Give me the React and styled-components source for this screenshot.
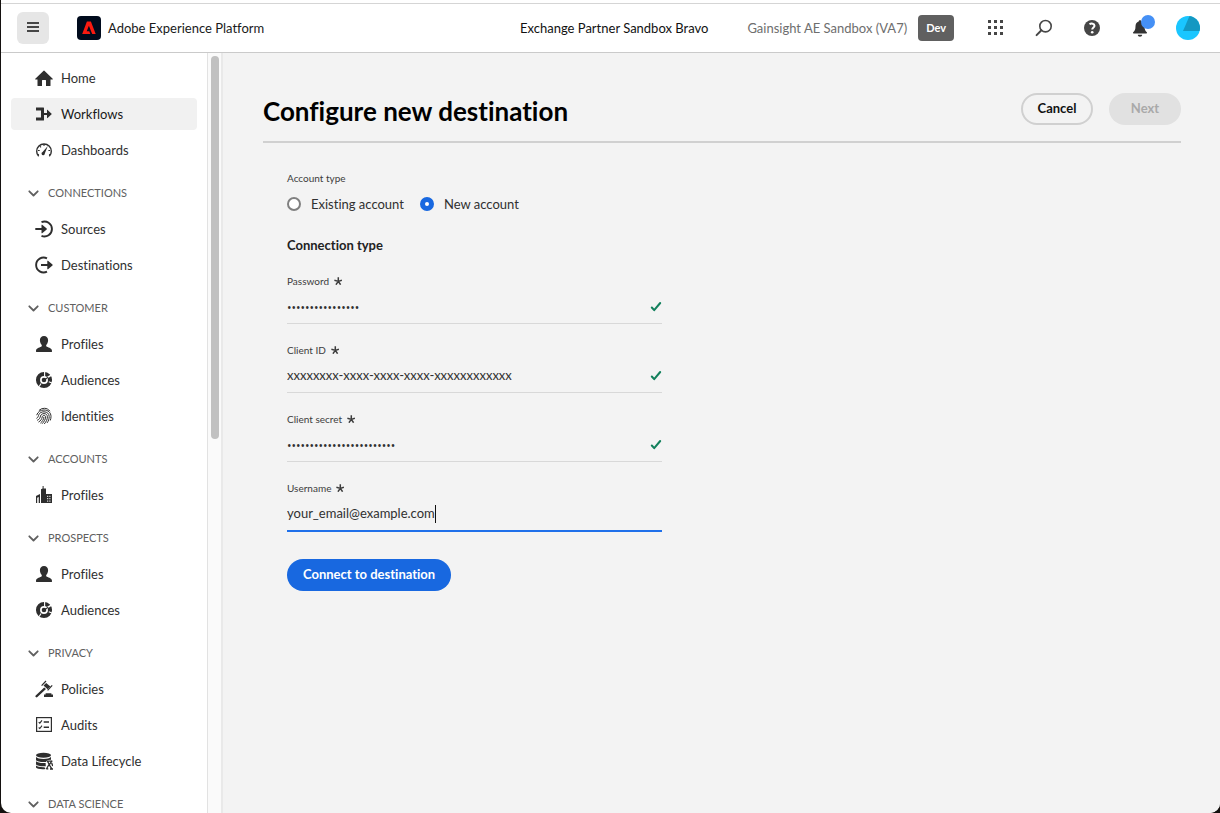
import React from "react";
import styled, { createGlobalStyle, css } from "styled-components";

const GlobalStyle = createGlobalStyle`
  *, *::before, *::after { box-sizing: border-box; }
  body {
    margin: 0;
    background: #14110f;
    color: #222;
    font-family: Lato, "Open Sans", sans-serif;
    font-size: 13px;
    line-height: 20px;
    font-variant-ligatures: no-common-ligatures;
  }
  button, input { font: inherit; color: inherit; }
`;

/* ---------- window ---------- */

const Window = styled.div`
  display: flex;
  flex-direction: column;
  height: 100vh;
  margin-left: 1px;
  padding-top: 3px;
  background: #fff;
  border-radius: 0 0 10px 10px;
  overflow: hidden;
`;

const TopBar = styled.header`
  flex: none;
  display: flex;
  align-items: center;
  height: 50px;
  padding: 0 16px;
  border-top: 1px solid #d5d5d5;
  border-bottom: 1px solid #cacaca;
`;

const MenuButton = styled.button`
  display: grid;
  place-items: center;
  width: 32px;
  height: 32px;
  padding: 0;
  border: 0;
  border-radius: 6px;
  background: #e6e6e6;
`;

const Brand = styled.a`
  display: flex;
  align-items: center;
  gap: 7px;
  margin-left: 28px;
  color: #1a1a1a;
  text-decoration: none;
`;

const Context = styled.div`
  display: flex;
  align-items: center;
  margin-left: auto;
  color: #111;
  white-space: nowrap;
`;

const SandboxName = styled.span`
  margin-left: 39px;
  color: #6e6e6e;
`;

const Badge = styled.span`
  margin-left: 11px;
  padding: 3px 8px;
  border-radius: 4px;
  background: #606060;
  color: #fff;
  font-size: 11px;
  font-weight: 700;
`;

const Tools = styled.div`
  display: flex;
  gap: 16px;
  margin-left: 26px;
`;

const ToolButton = styled.button`
  position: relative;
  display: grid;
  place-items: center;
  width: 32px;
  height: 32px;
  padding: 0;
  border: 0;
  background: none;
  color: #464646;
`;

const Dot = styled.span`
  position: absolute;
  top: 3px;
  right: 1px;
  width: 14px;
  height: 14px;
  border-radius: 50%;
  background: #4590f5;
`;

const Body = styled.div`
  flex: 1;
  display: flex;
  min-height: 0;
`;

/* ---------- side navigation ---------- */

const Nav = styled.nav`
  flex: none;
  width: 206px;
  padding: 9px 10px 0;
  overflow-y: auto;
  scrollbar-width: none;
`;

const NavList = styled.ul`
  display: flex;
  flex-direction: column;
  gap: 4px;
  margin: 0;
  padding: 0;
  list-style: none;
`;

const NavLink = styled.a`
  display: flex;
  align-items: center;
  gap: 8px;
  height: 32px;
  padding-left: 24px;
  border-radius: 4px;
  color: ${(p) => (p.$active ? "#1a1a1a" : "#303030")};
  background: ${(p) => (p.$active ? "#f1f1f1" : "transparent")};
  text-decoration: none;
  svg { color: #2e2e2e; }
`;

const GroupButton = styled.button`
  display: flex;
  align-items: center;
  gap: 9px;
  width: 100%;
  height: 32px;
  margin: 11px 0 4px;
  padding: 0 0 0 17px;
  border: 0;
  background: none;
  color: #606060;
  font-size: 11px;
`;

const Track = styled.div`
  flex: none;
  width: 16px;
  padding: 3px 2px 0 3px;
  background: #fafafa;
  border-left: 1px solid #e2e2e2;
  border-right: 2px solid #e9e9e9;
`;

const Thumb = styled.div`
  width: 8px;
  height: 383px;
  max-height: 100%;
  border-radius: 4px;
  background: #c1c1c1;
`;

/* ---------- page ---------- */

const Main = styled.main`
  flex: 1;
  min-width: 0;
  padding: 40px 39px 0 40px;
  overflow-y: auto;
  background: #f3f3f3;
`;

const PageHeader = styled.div`
  display: flex;
  align-items: center;
  gap: 16px;
  padding-bottom: 16px;
  border-bottom: 2px solid #d0d0d0;
`;

const Title = styled.h1`
  flex: 1;
  margin: 0;
  padding-top: 4px;
  color: #000;
  font-size: 26px;
  line-height: 28px;
  font-weight: 700;
`;

const Pill = styled.button`
  height: 32px;
  padding: 0 16px 2px;
  min-width: 72px;
  border: 0;
  border-radius: 16px;
  font-size: 13px;
  font-weight: 700;
  line-height: 20px;
  white-space: nowrap;
  ${(p) =>
    p.$kind === "outline" &&
    css`
      padding: 0 12px 2px;
      border: 2px solid #d0d0d0;
      background: transparent;
      color: #111;
    `}
  ${(p) =>
    p.$kind === "disabled" &&
    css`
      background: #e1e1e1;
      color: #a9a9a9;
    `}
  ${(p) =>
    p.$kind === "primary" &&
    css`
      margin-top: 27px;
      background: #1868e0;
      color: #fff;
    `}
`;

const Form = styled.form`
  width: 399px;
  max-width: 100%;
  padding: 25px 0 40px 24px;
`;

const RadioGroup = styled.fieldset`
  display: flex;
  gap: 16px;
  margin: 0;
  padding: 0;
  border: 0;
  white-space: nowrap;
`;

const Legend = styled.legend`
  padding: 0;
  margin-bottom: 6px;
  color: #3c3c3c;
  font-size: 10px;
`;

const RadioLabel = styled.label`
  display: flex;
  align-items: center;
  gap: 10px;
  color: #303030;
`;

const Radio = styled.input`
  appearance: none;
  width: 14px;
  height: 14px;
  margin: 0;
  border: 2px solid #808080;
  border-radius: 50%;
  background: #fff;
  &:checked {
    border: 5px solid #1868e0;
  }
`;

const SectionTitle = styled.h2`
  margin: 21px 0 16px;
  color: #222;
  font-size: 13px;
  font-weight: 700;
  line-height: 20px;
`;

const Fields = styled.div`
  display: flex;
  flex-direction: column;
  gap: 16px;
`;

const Label = styled.label`
  display: flex;
  align-items: center;
  gap: 5px;
  color: #3c3c3c;
  font-size: 10px;
  line-height: 20px;
`;

const Control = styled.div`
  display: flex;
  align-items: center;
  border-bottom: ${(p) => (p.$focused ? "2px solid #1f70ea" : "1px solid #d8d8d8")};
`;

const Input = styled.input`
  flex: ${(p) => (p.$focused ? "none" : "1")};
  field-sizing: ${(p) => (p.$focused ? "content" : "fixed")};
  min-width: 0;
  height: 32px;
  padding: 0 0 2px;
  border: 0;
  outline: 0;
  background: none;
  color: #303030;
  caret-color: transparent;
  &[type="password"] {
    padding: 0;
    font-family: "Open Sans", sans-serif;
    font-size: 12px;
  }
`;

const Caret = styled.span`
  width: 1px;
  height: 18px;
  background: #111;
`;

/* ---------- icons ---------- */

const Glyph = styled.svg`
  flex: none;
`;

const Icon = ({ size = 18, children }) => (
  <Glyph width={size} height={size} viewBox={`0 0 ${size} ${size}`} fill="currentColor" aria-hidden="true">
    {children}
  </Glyph>
);

const stroke = (w) => ({ fill: "none", stroke: "currentColor", strokeWidth: w });

const HomeIcon = () => (
  <Icon>
    <path d="M17.7 9.7 9.4 1.8a.6.6 0 0 0-.8 0L.3 9.7c-.3.3-.1.8.3.8H2.500V16.500a.5.5 0 0 0 .5.5H7v-5.500a.5.5 0 0 1 .5-.5h3a.5.5 0 0 1 .5.5V17h4a.5.5 0 0 0 .5-.5v-6h1.900c.4 0 .6-.5.3-.8z" />
  </Icon>
);

const WorkflowIcon = () => (
  <Icon>
    <path d="M1 2.500h7.500a.5.5 0 0 1 .5.5v5h3V5.200c0-.3.4-.5.600-.2l4 3.700c.2.2.2.4 0 .6l-4 3.700c-.2.300-.6.100-.6-.2V10H9v5a.5.5 0 0 1-.5.5H1v-3h5v-7H1z" />
  </Icon>
);

const GaugeIcon = () => (
  <Icon>
    <path d="M3.700 15.300A7.300 7.300 0 1 1 14.300 15.300" {...stroke(1.400)} />
    <path d="M12.800 5 9.900 12.300a1.700 1.700 0 1 1-2.300-1.400z" />
    <path d="M9 3v2M4.800 5l1.200 1.300M3 9.500h1.700M15 9.500h-1.600M3.800 13.200l-1 .8M14.200 13.200l1 .8" {...stroke(1.100)} />
  </Icon>
);

const SourcesIcon = () => (
  <Icon>
    <path d="M6.500 2.100A7.500 7.500 0 1 1 6.500 15.900" {...stroke(1.900)} />
    <path d="M.3 8h6.200V5.100c0-.4.4-.5.7-.3l4.500 3.800c.2.200.2.600 0 .8l-4.500 3.800c-.3.200-.7.100-.7-.3V10H.3z" />
  </Icon>
);

const DestinationsIcon = () => (
  <Icon>
    <path d="M12 2.300A7.500 7.500 0 1 0 12 15.700" {...stroke(1.900)} />
    <path d="M6 8h6.300V5.100c0-.4.4-.5.7-.3l4.500 3.800c.2.200.2.600 0 .8l-4.500 3.800c-.3.200-.7.100-.7-.3V10H6z" />
  </Icon>
);

const UserIcon = () => (
  <Icon>
    <path d="M9 1c2.500 0 4.100 1.700 4.100 4.300 0 1.800-.8 3.500-1.700 4.500-.4.500-.3 1.600.4 1.900 2.300.8 5.200 1.600 5.200 4.300v.6a.4.4 0 0 1-.4.4H1.400a.4.4 0 0 1-.4-.4V16c0-2.700 2.900-3.500 5.200-4.300.7-.3.8-1.400.4-1.900-.9-1-1.700-2.700-1.700-4.500C4.900 2.700 6.500 1 9 1z" />
  </Icon>
);

const AudienceIcon = () => (
  <Icon>
    <circle cx="9" cy="9" r="6" {...stroke(4.100)} />
    <path d="M9.600.5v5M13.800 10.700l3.700 1.500M6 12.500 4.200 15.500" stroke="#fff" strokeWidth="1.100" />
    <path d="M10.400 7.800 17.200 3.600" stroke="#fff" strokeWidth="1.600" />
    <circle cx="9" cy="9" r="2.300" />
    <path d="M9.600 8.600 13.200 6.200" {...stroke(1.100)} />
  </Icon>
);

const FingerprintIcon = () => (
  <Icon>
    <g {...stroke(1)} strokeLinecap="round">
      <path d="M4.200 3.200A7 7 0 0 1 9.400 1.300c2.200 0 4.100 1 5.300 2.600" />
      <path d="M1.800 7.800C2.800 4.800 5.500 3 9 3c4.200 0 7 2.800 7 6.500 0 1.300-.2 2.500-.6 3.600" />
      <path d="M1.800 11.200c1.600-.8 1.400-2.200 2-3.500C4.600 5.800 6.500 4.800 9 4.800c3.200 0 5.200 2 5.200 4.800 0 2.300-.7 4.400-1.900 6" />
      <path d="M2.500 13.200c2.300-1 2.500-2.600 3-4.200.4-1.500 1.800-2.400 3.500-2.400 2.100 0 3.400 1.300 3.400 3.200 0 2.600-1.200 5-2.900 6.900" />
      <path d="M3.800 14.900c2.200-1.200 3-3 3.400-4.900.2-1 .9-1.600 1.800-1.600 1 0 1.700.7 1.600 1.700-.2 2.500-1.500 4.700-3.300 6.400" />
      <path d="M8.900 10.200c-.3 2.300-1.300 4.200-3.200 5.700" />
    </g>
  </Icon>
);

const BuildingIcon = () => (
  <Icon>
    <path d="M7.600 0h1v2.600H11V8h6v9H6V3.200l1.600-.6z" />
    <path d="M1 17V10l4-2v9H3.700v-6L2.200 11.700V17z" />
    <path d="M12.200 9.700h1v1.200h-1zm2.200 0h1v1.200h-1zm-2.200 2.400h1v1.200h-1zm2.200 0h1v1.200h-1zm-2.200 2.400h1v1.200h-1zm2.200 0h1v1.200h-1z" fill="#fff" />
  </Icon>
);

const GavelIcon = () => (
  <Icon>
    <path d="M9.200 7.400 11 9 2.400 17a1.100 1.100 0 0 1-1.700-1.500z" />
    <path d="M6.600 5.700 11 1M12.600 10.300 17.200 5.400" {...stroke(1.200)} />
    <path d="M11.200 2.900 15.400 6.600 12.600 9.300 8.500 5.600z" />
    <path d="M10.600 13.200h5.800v1.200H18v2.600H9v-2.600h1.600z" />
  </Icon>
);

const AuditIcon = () => (
  <Icon>
    <rect x="1.600" y="1.600" width="14.800" height="13.800" {...stroke(1.200)} />
    <path d="M8.700 6h5.300M8.700 11.300h5.300" {...stroke(1.500)} />
    <path d="M3.700 6.200l1.100 1 2.200-2.800M3.700 11.500l1.100 1 2.200-2.800" {...stroke(1.100)} />
  </Icon>
);

const DataIcon = () => (
  <Icon>
    <ellipse cx="8.500" cy="3.200" rx="7.500" ry="2.500" />
    <path d="M1 4.900c1.200 1.300 4 2 7.500 2s6.300-.7 7.500-2v3c-2.200-.3-4.200.5-5 2.100-4.600.4-8.800-.5-10-1.800z" />
    <path d="M1 9.300c1.400 1.300 5 2 9.600 1.700l.2 3.200c-4.700.3-8.600-.4-9.800-1.700z" />
    <path d="M1 13.600c1.300 1.200 4.600 1.900 8.500 1.700l1 1.700C6 17.600 1.800 16.700 1 15.500z" />
    <path d="M12 9.200h4.900M12.400 9l1.700 3.300-2.700 4.700M17.200 8.600l-3 4.200 2.500 3.900M11.300 16.800h2M15 17h3M16.700 11l1 3" {...stroke(1.300)} />
  </Icon>
);

const Chevron = () => (
  <Icon size={11}>
    <path d="M1.300 3.300 5.500 7.500l4.200-4.200" {...stroke(1.800)} strokeLinecap="round" strokeLinejoin="round" />
  </Icon>
);

const Asterisk = () => (
  <Icon size={8}>
    <path d="M4.300 4.400V.3M4.300 4.400.4 3.200M4.300 4.400l3.600-1.200M4.300 4.400 1.900 7.700M4.300 4.400l2.300 3.300" {...stroke(1.500)} />
  </Icon>
);

const Check = () => (
  <svg width="12" height="12" viewBox="0 0 12 12" fill="none" stroke="#12805c" strokeWidth="2" strokeLinecap="round" strokeLinejoin="round" role="img" aria-label="Valid">
    <path d="M1.800 6.500 4.200 9.200 10.200 2" />
  </svg>
);

const BrandLogo = () => (
  <svg width="24" height="24" viewBox="0 0 24 24" aria-hidden="true">
    <rect width="24" height="24" rx="4" fill="#000b1d" />
    <path d="M9.900 5.500h4L18.700 18h-3.500l-3.300-8.300-2.200 5.500h2.600l1 2.800H5.200z" fill="#fa1a10" />
  </svg>
);

const MenuIcon = () => (
  <Icon size={12}>
    <path d="M0 0h12v2H0zM0 4h12v2H0zM0 8h12v2H0z" fill="#464646" />
  </Icon>
);

const AppsIcon = () => (
  <Icon>
    {[1, 7, 13].map((y) => [1, 7, 13].map((x) => <rect key={`${x}-${y}`} x={x} y={y} width="3" height="3" />))}
  </Icon>
);

const SearchIcon = () => (
  <Icon>
    <circle cx="10.500" cy="7.200" r="5.700" {...stroke(1.600)} />
    <path d="M6.400 11.300 1.600 16.100" {...stroke(2)} strokeLinecap="round" />
  </Icon>
);

const HelpIcon = () => (
  <Icon>
    <circle cx="9" cy="9" r="8" />
    <path d="M6.500 5.300c1.700-1.300 5-.9 5 1.400 0 1.800-2.300 1.800-2.300 3.900" stroke="#fff" strokeWidth="2" fill="none" />
    <circle cx="9.200" cy="13.200" r="1.300" fill="#fff" />
  </Icon>
);

const BellIcon = () => (
  <Icon>
    <path d="M9 1.200c.8 0 1.300.5 1.300 1.200 2.200.6 3.200 2.400 3.200 4.900 0 3.400.8 4.700 2.300 6 .5.500.2 1.200-.4 1.200H2.600c-.6 0-.9-.7-.4-1.200 1.500-1.300 2.300-2.600 2.300-6 0-2.500 1-4.300 3.200-4.900 0-.7.5-1.200 1.300-1.200zM6.800 15.700h4.400c0 1.100-1 2-2.200 2s-2.200-.9-2.200-2z" fill="#333" />
  </Icon>
);

const AvatarPicture = () => (
  <svg width="24" height="24" viewBox="0 0 24 24" aria-hidden="true">
    <circle cx="12" cy="12" r="12" fill="#1ac6ff" />
    <path d="M13.500.1A12 12 0 0 1 23.600 15H7z" fill="#1398c2" />
  </svg>
);

/* ---------- data ---------- */

const groups = [
  { items: [["Home", HomeIcon], ["Workflows", WorkflowIcon, true], ["Dashboards", GaugeIcon]] },
  { title: "CONNECTIONS", items: [["Sources", SourcesIcon], ["Destinations", DestinationsIcon]] },
  { title: "CUSTOMER", items: [["Profiles", UserIcon], ["Audiences", AudienceIcon], ["Identities", FingerprintIcon]] },
  { title: "ACCOUNTS", items: [["Profiles", BuildingIcon]] },
  { title: "PROSPECTS", items: [["Profiles", UserIcon], ["Audiences", AudienceIcon]] },
  { title: "PRIVACY", items: [["Policies", GavelIcon], ["Audits", AuditIcon], ["Data Lifecycle", DataIcon]] },
  { title: "DATA SCIENCE", items: [] },
];

const fields = [
  { id: "password", label: "Password", type: "password", value: "x".repeat(16) },
  { id: "client-id", label: "Client ID", type: "text", value: "xxxxxxxx-xxxx-xxxx-xxxx-xxxxxxxxxxxx" },
  { id: "client-secret", label: "Client secret", type: "password", value: "x".repeat(24) },
  { id: "username", label: "Username", type: "text", value: "your_email@example.com", focused: true },
];

function Field({ id, label, type, value, focused }) {
  return (
    <div>
      <Label htmlFor={id}>
        {label}
        <Asterisk />
      </Label>
      <Control $focused={focused}>
        <Input id={id} type={type} defaultValue={value} $focused={focused} required autoComplete="off" />
        {focused ? <Caret /> : <Check />}
      </Control>
    </div>
  );
}

export default function App() {
  return (
    <>
      <GlobalStyle />
      <Window>
        <TopBar>
          <MenuButton type="button" aria-label="Menu"><MenuIcon /></MenuButton>
          <Brand href="#home">
            <BrandLogo />
            Adobe Experience Platform
          </Brand>
          <Context>
            <span>Exchange Partner Sandbox Bravo</span>
            <SandboxName>Gainsight AE Sandbox (VA7)</SandboxName>
            <Badge>Dev</Badge>
          </Context>
          <Tools>
            <ToolButton type="button" aria-label="Apps"><AppsIcon /></ToolButton>
            <ToolButton type="button" aria-label="Search"><SearchIcon /></ToolButton>
            <ToolButton type="button" aria-label="Help"><HelpIcon /></ToolButton>
            <ToolButton type="button" aria-label="Notifications"><BellIcon /><Dot /></ToolButton>
            <ToolButton type="button" aria-label="Account"><AvatarPicture /></ToolButton>
          </Tools>
        </TopBar>
        <Body>
          <Nav aria-label="Main">
            {groups.map((group) => (
              <section key={group.title || "top"}>
                {group.title && (
                  <GroupButton type="button" aria-expanded="true">
                    <Chevron />
                    {group.title}
                  </GroupButton>
                )}
                <NavList>
                  {group.items.map(([name, ItemIcon, active]) => (
                    <li key={name}>
                      <NavLink href={`#${name}`} $active={active}>
                        <ItemIcon />
                        {name}
                      </NavLink>
                    </li>
                  ))}
                </NavList>
              </section>
            ))}
          </Nav>
          <Track><Thumb /></Track>
          <Main>
            <PageHeader>
              <Title>Configure new destination</Title>
              <Pill type="button" $kind="outline">Cancel</Pill>
              <Pill type="button" $kind="disabled" disabled>Next</Pill>
            </PageHeader>
            <Form onSubmit={(e) => e.preventDefault()}>
              <RadioGroup>
                <Legend>Account type</Legend>
                <RadioLabel>
                  <Radio type="radio" name="account" />
                  Existing account
                </RadioLabel>
                <RadioLabel>
                  <Radio type="radio" name="account" defaultChecked />
                  New account
                </RadioLabel>
              </RadioGroup>
              <SectionTitle>Connection type</SectionTitle>
              <Fields>
                {fields.map((f) => <Field key={f.id} {...f} />)}
              </Fields>
              <Pill type="submit" $kind="primary">Connect to destination</Pill>
            </Form>
          </Main>
        </Body>
      </Window>
    </>
  );
}
